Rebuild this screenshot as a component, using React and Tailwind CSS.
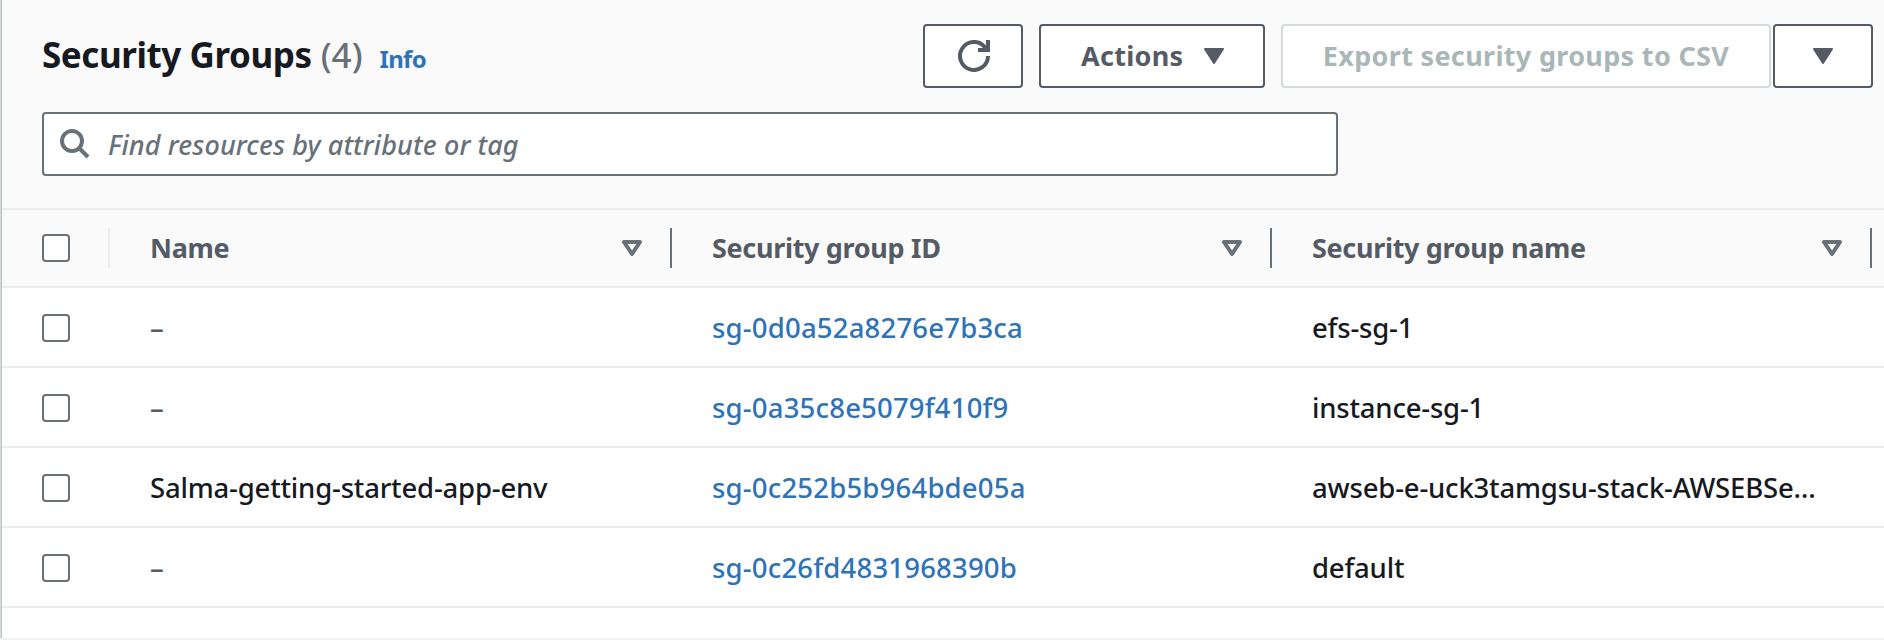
import React from "react";

const rows = [
  { name: "–", id: "sg-0d0a52a8276e7b3ca", group: "efs-sg-1" },
  { name: "–", id: "sg-0a35c8e5079f410f9", group: "instance-sg-1" },
  { name: "Salma-getting-started-app-env", id: "sg-0c252b5b964bde05a", group: "awseb-e-uck3tamgsu-stack-AWSEBSe…" },
  { name: "–", id: "sg-0c26fd4831968390b", group: "default" },
];

const grid = "grid grid-cols-[108px_562px_600px_600px_1fr] items-center";

function Checkbox() {
  return <span className="ml-10 block size-7 rounded-[4px] border-2 border-[#687078] bg-white" />;
}

function CaretFilled() {
  return (
    <svg className="block h-4 w-5" viewBox="0 0 20 16" fill="#545b64" stroke="#545b64" strokeWidth="2" strokeLinejoin="round">
      <path d="M1 1h18L10 15z" />
    </svg>
  );
}

function SortIcon() {
  return (
    <svg className="block h-4 w-5" viewBox="0 0 20 16" fill="none" stroke="#687078" strokeWidth="4" strokeLinejoin="round">
      <path d="M2 2h16L10 14z" />
    </svg>
  );
}

function HeaderCell({ label }) {
  return (
    <div className="flex h-10 items-center justify-between border-r-2 border-[#687078] pr-7 pl-10">
      <span className="text-[27px] leading-9 font-bold tracking-[-0.012em] text-[#545b64]">{label}</span>
      <SortIcon />
    </div>
  );
}

export default function App() {
  return (
    <div className="h-[640px] w-[1884px] overflow-hidden border-b-2 border-[#f2f3f3] bg-white font-['Noto_Sans',sans-serif]">
      <div className="h-[638px] border-l border-[#d5dbdb]">
        <div className="h-full border-l border-[#b9c3c3]">
          <header className="h-[210px] border-b-2 border-[#eaeded] bg-[#fafafa] pt-6 pl-10">
            <div className="flex h-16 items-center justify-between pr-[11px]">
              <div className="flex items-baseline pt-0.5">
                <h1 className="text-[35px] leading-10 font-bold tracking-[-0.012em] text-[#16191f]">Security Groups</h1>
                <span className="ml-[9px] text-[35px] leading-10 font-medium text-[#687078]">(4)</span>
                <span className="ml-[17px] text-[24px] leading-10 font-bold tracking-[-0.03em] text-[#2e73b8]">Info</span>
              </div>
              <div className="flex">
                <button className="flex h-16 w-[100px] items-center justify-center rounded-[4px] border-2 border-[#545b64] bg-white">
                  <svg className="ml-0.5 size-8" viewBox="0 0 32 32" fill="none" stroke="#545b64" strokeWidth="4">
                    <path d="M30 16A14 14 0 1 1 26.5 6.7L29 10" />
                    <path d="M30 0v10H20" />
                  </svg>
                </button>
                <button className="ml-4 flex h-16 w-[226px] items-center rounded-[4px] border-2 border-[#545b64] bg-white pl-10 text-[27px] font-bold text-[#545b64]">
                  <span className="w-[123px] text-left tracking-[0.01em]">Actions</span>
                  <CaretFilled />
                </button>
                <button className="ml-4 flex h-16 w-[490px] items-center justify-center rounded-[4px] border-2 border-[#d5dbdb] bg-white text-[27px] font-bold tracking-[0.012em] whitespace-nowrap text-[#aab7b8]">
                  <span>Export security groups to CSV</span>
                </button>
                <button className="ml-0.5 flex h-16 w-[100px] items-center justify-center rounded-[4px] border-2 border-[#545b64] bg-white">
                  <CaretFilled />
                </button>
              </div>
            </div>
            <div className="mt-6 flex h-16 w-[1296px] items-center rounded-[4px] border-2 border-[#687078] bg-white pl-4">
              <svg className="size-[30px]" viewBox="0 0 30 30" fill="none" stroke="#687078" strokeWidth="4">
                <circle cx="12" cy="12" r="10" />
                <path d="M19 19l9 9" />
              </svg>
              <span className="ml-[18px] pt-0.5 text-[27px] leading-9 font-medium tracking-[0.004em] text-[#687078] italic">Find resources by attribute or tag</span>
            </div>
          </header>

          <div className={`${grid} h-[78px] border-b-2 border-[#eaeded] bg-[#fafafa]`}>
            <div className="flex h-10 items-center border-r-2 border-[#eaeded]">
              <Checkbox />
            </div>
            <HeaderCell label="Name" />
            <HeaderCell label="Security group ID" />
            <HeaderCell label="Security group name" />
          </div>

          {rows.map((row) => (
            <div key={row.id} className={`${grid} h-20 border-b-2 border-[#eaeded] pt-0.5 text-[27.5px] leading-9 font-medium tracking-[-0.007em] text-[#16191f]`}>
              <Checkbox />
              <span className={row.name === "–" ? "pl-10 text-[#545b64]" : "pl-10"}>{row.name}</span>
              <span className="pl-10 tracking-[0.007em] text-[#2e73b8]">{row.id}</span>
              <span className="pl-10">{row.group}</span>
            </div>
          ))}
        </div>
      </div>
    </div>
  );
}
